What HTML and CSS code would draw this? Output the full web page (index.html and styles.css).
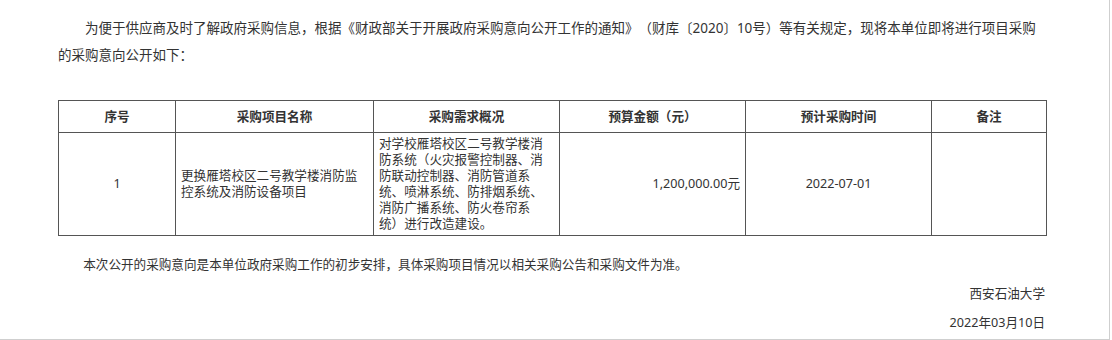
FILE: index.html
```html
<!DOCTYPE html>
<html lang="zh-CN">
<head>
<meta charset="utf-8">
<title>采购意向公开</title>
<link rel="stylesheet" href="styles.css">
</head>
<body>
<div class="page">
  <p class="intro">为便于供应商及时了解政府采购信息，根据《财政部关于开展政府采购意向公开工作的通知》（财库〔2020〕10号）等有关规定，现将本单位即将进行项目采购的采购意向公开如下：</p>
  <table class="plan">
    <colgroup>
      <col class="c-no">
      <col class="c-name">
      <col class="c-desc">
      <col class="c-budget">
      <col class="c-time">
      <col class="c-note">
    </colgroup>
    <thead>
      <tr>
        <th>序号</th>
        <th>采购项目名称</th>
        <th>采购需求概况</th>
        <th>预算金额（元）</th>
        <th>预计采购时间</th>
        <th>备注</th>
      </tr>
    </thead>
    <tbody>
      <tr>
        <td class="center">1</td>
        <td>更换雁塔校区二号教学楼消防监控系统及消防设备项目</td>
        <td>对学校雁塔校区二号教学楼消防系统（火灾报警控制器、消防联动控制器、消防管道系统、喷淋系统、防排烟系统、消防广播系统、防火卷帘系统）进行改造建设。</td>
        <td class="right">1,200,000.00元</td>
        <td class="center">2022-07-01</td>
        <td></td>
      </tr>
    </tbody>
  </table>
  <p class="note">本次公开的采购意向是本单位政府采购工作的初步安排，具体采购项目情况以相关采购公告和采购文件为准。</p>
  <p class="sign">西安石油大学</p>
  <p class="sign">2022年03月10日</p>
</div>
</body>
</html>
```

FILE: styles.css
```css
html, body {
  margin: 0;
  padding: 0;
  background: #fff;
}

body {
  font-family: "Noto Sans", "Noto Sans CJK SC", sans-serif;
  color: #333;
  text-spacing-trim: space-all;
}

.page {
  box-sizing: border-box;
  width: 1110px;
  height: 340px;
  padding: 15px 64px 0 58px;
  border-right: 1px solid #cfcfcf;
  border-bottom: 1px solid #cfcfcf;
  overflow: hidden;
}

.intro {
  margin: 0;
  font-size: 13.5px;
  line-height: 27px;
  text-indent: 2em;
}

.plan {
  margin-top: 31px;
  width: 988px;
  border-collapse: collapse;
  table-layout: fixed;
  font-size: 12.6px;
  color: #333;
}

.c-no { width: 117px; }
.c-name { width: 198px; }
.c-desc { width: 186px; }
.c-budget { width: 186px; }
.c-time { width: 186px; }
.c-note { width: 115px; }

.plan th,
.plan td {
  border: 1px solid #555;
  padding: 3px 5px;
  line-height: 16px;
  vertical-align: middle;
}

.plan th {
  padding: 7px 5px;
  line-height: 17px;
  font-weight: bold;
  text-align: center;
}

.plan td {
  text-align: left;
}

.plan td.center { text-align: center; }
.plan td.right { text-align: right; }

.note {
  margin: 14px 0 0;
  font-size: 12.6px;
  line-height: 29px;
  text-indent: 2em;
}

.sign {
  margin: 0;
  font-size: 12.6px;
  line-height: 29px;
  text-align: right;
}
```
